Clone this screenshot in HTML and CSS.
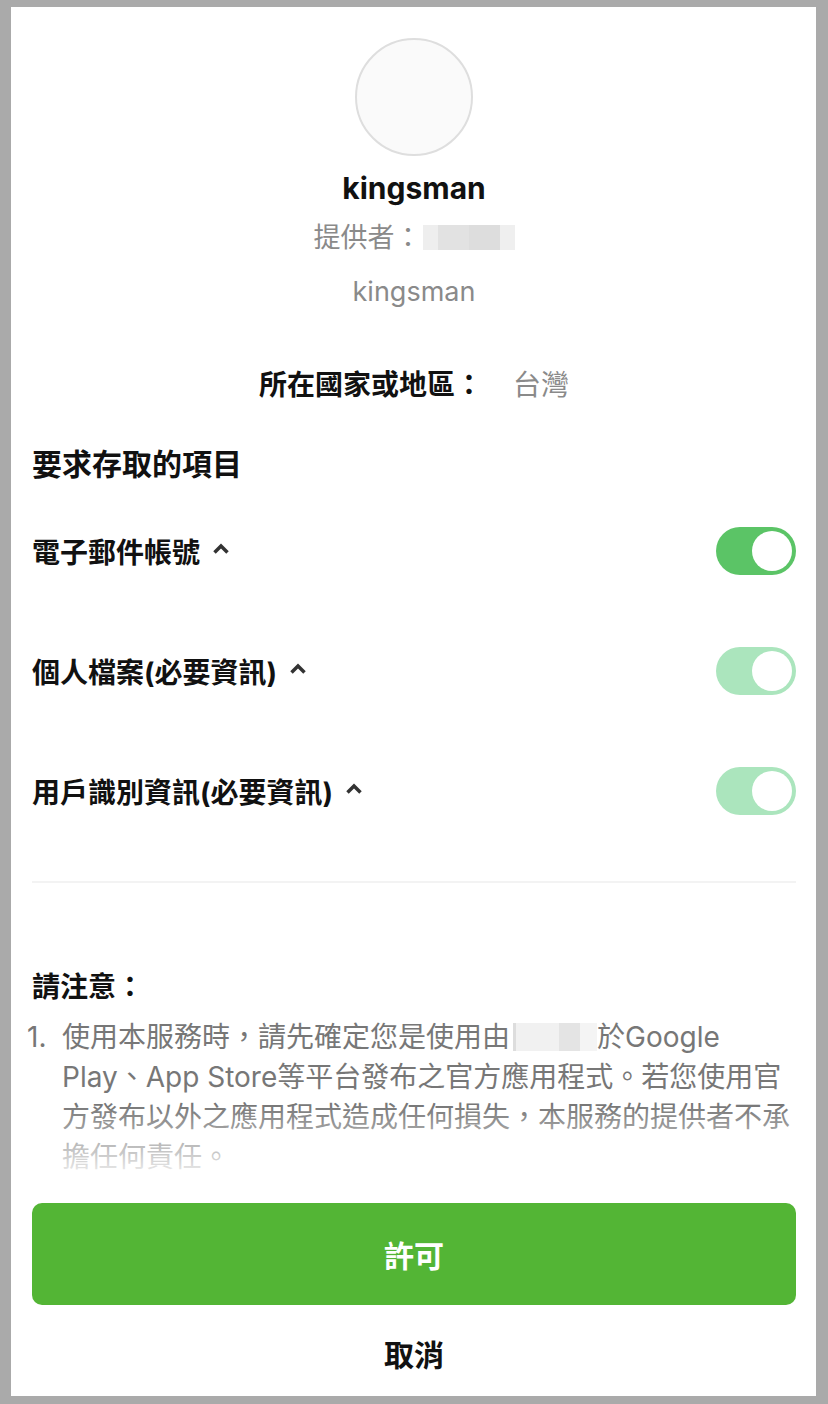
FILE: index.html
```html
<!DOCTYPE html>
<html lang="zh-Hant">
<head>
    <meta charset="UTF-8">
    <meta name="viewport" content="width=device-width, initial-scale=1.0">
    <title>kingsman</title>
    <link rel="stylesheet" href="styles.css">
</head>
<body>
<div class="sheet">
    <div class="scroll">
        <div class="app">
            <div class="avatar"></div>
            <h1 class="app-name">kingsman</h1>
            <p class="provider">提供者：<span class="redacted provider-redacted"></span></p>
            <p class="app-id">kingsman</p>
            <p class="region"><span class="region-label">所在國家或地區：</span><span class="region-value">台灣</span></p>
        </div>

        <h2 class="section-title">要求存取的項目</h2>
        <ul class="perm-list">
            <li class="perm">
                <span class="perm-name">電子郵件帳號</span>
                <svg class="chevron" width="18" height="12" viewBox="0 0 18 12"><polyline points="2.5,9.5 9,3 15.5,9.5"/></svg>
                <span class="toggle"><span class="knob"></span></span>
            </li>
            <li class="perm">
                <span class="perm-name">個人檔案(必要資訊)</span>
                <svg class="chevron" width="18" height="12" viewBox="0 0 18 12"><polyline points="2.5,9.5 9,3 15.5,9.5"/></svg>
                <span class="toggle locked"><span class="knob"></span></span>
            </li>
            <li class="perm">
                <span class="perm-name">用戶識別資訊(必要資訊)</span>
                <svg class="chevron" width="18" height="12" viewBox="0 0 18 12"><polyline points="2.5,9.5 9,3 15.5,9.5"/></svg>
                <span class="toggle locked"><span class="knob"></span></span>
            </li>
        </ul>

        <hr class="divider">

        <h2 class="notice-title">請注意：</h2>
        <ol class="notice-list">
            <li>
                <span class="num">1.</span>
                <span class="notice-text">使用本服務時，請先確定您是使用由<span class="redacted inline-redacted"></span>於Google<br>Play、App Store等平台發布之官方應用程式。若您使用官<br>方發布以外之應用程式造成任何損失，本服務的提供者不承<br>擔任何責任。</span>
            </li>
        </ol>

        <!-- fade at the bottom of the scroll area -->
        <div class="fade"></div>
    </div>

    <div class="actions">
        <button class="allow-button">許可</button>
        <button class="cancel-button">取消</button>
    </div>
</div>
</body>
</html>
```

FILE: styles.css
```css
body {
    font-family: 'Inter', 'Noto Sans CJK TC', sans-serif;
    margin: 0;
    padding: 7px 12px 8px 11px;
    background-color: #aaaaaa;
    color: #111;
}

.sheet {
    background: #fff;
    height: 1389px;
    box-sizing: border-box;
    padding: 31px 20px 0 21px;
    display: flex;
    flex-direction: column;
}

.scroll {
    position: relative;
    overflow: hidden;
    margin: 0 -8px;
    padding: 0 8px;
}

.app {
    display: flex;
    flex-direction: column;
    align-items: center;
}

.avatar {
    width: 118px;
    height: 118px;
    box-sizing: border-box;
    border-radius: 50%;
    border: 2px solid #dedede;
    background-color: #fafafa;
}

.app-name {
    margin: 14px 0 0;
    font-size: 30px;
    line-height: 36px;
    font-weight: 700;
    color: #111;
}

.provider,
.app-id {
    margin: 14px 0 0;
    font-size: 27px;
    line-height: 36px;
    color: #8a8a8a;
    display: flex;
    align-items: center;
}

.app-id {
    margin-top: 18px;
}

.redacted {
    display: inline-block;
    background: linear-gradient(90deg, #eeeeee 0 16%, #e2e2e2 16% 50%, #dddddd 50% 84%, #efefef 84%);
}

.provider-redacted {
    width: 92px;
    height: 25px;
    margin-left: 1px;
    margin-top: -2px;
}

.region {
    margin: 57px 0 0;
    font-size: 28px;
    line-height: 36px;
}

.region-label {
    font-weight: 700;
    color: #111;
}

.region-value {
    margin-left: 30px;
    color: #8a8a8a;
}

.section-title {
    margin: 41px 0 0;
    font-size: 30px;
    line-height: 40px;
    font-weight: 700;
    color: #111;
}

.perm-list {
    list-style: none;
    margin: 7px 0 0;
    padding: 0;
}

.perm {
    height: 120px;
    display: flex;
    align-items: center;
}

.perm-name {
    font-size: 28px;
    font-weight: 700;
    color: #111;
}

.chevron {
    margin-left: 12px;
    margin-top: -4px;
}

.chevron polyline {
    fill: none;
    stroke: #333;
    stroke-width: 3.5;
}

.toggle {
    margin-left: auto;
    width: 80px;
    height: 48px;
    box-sizing: border-box;
    padding: 4px;
    border-radius: 24px;
    background-color: #5bc466;
    display: flex;
    justify-content: flex-end;
}

.toggle.locked {
    background-color: #abe5bd;
}

.knob {
    width: 40px;
    height: 40px;
    border-radius: 50%;
    background: #fff;
}

.divider {
    margin: 30px 0 0;
    border: none;
    height: 2px;
    background-color: #f3f3f3;
}

.notice-title {
    margin: 84px 0 0;
    font-size: 28px;
    line-height: 40px;
    font-weight: 700;
    color: #111;
}

.notice-list {
    list-style: none;
    margin: 10px 0 0;
    padding: 0;
}

.notice-list li {
    display: flex;
    font-size: 28px;
    line-height: 40px;
    color: #777;
}

.notice-list .num {
    flex: none;
    width: 35px;
    margin-left: -5px;
}

.inline-redacted {
    width: 84px;
    height: 28px;
    margin-left: 3px;
    vertical-align: -4px;
    background: linear-gradient(90deg, #dddddd 0 3%, #f1f1f1 3% 55%, #e4e4e4 55% 80%, #f4f4f4 80%);
}

.fade {
    position: absolute;
    left: 0;
    right: 0;
    bottom: 0;
    height: 72px;
    background: linear-gradient(to bottom, rgba(255, 255, 255, 0), rgba(255, 255, 255, 0.9));
}

.actions {
    display: flex;
    flex-direction: column;
}

.allow-button {
    margin-top: 26px;
    height: 102px;
    border: none;
    border-radius: 10px;
    background-color: #53b535;
    color: #fff;
    font-family: inherit;
    font-size: 30px;
    font-weight: 700;
    cursor: pointer;
}

.cancel-button {
    margin-top: 30px;
    padding: 0;
    border: none;
    background: none;
    color: #111;
    font-family: inherit;
    font-size: 30px;
    line-height: 40px;
    font-weight: 700;
    cursor: pointer;
}
```
